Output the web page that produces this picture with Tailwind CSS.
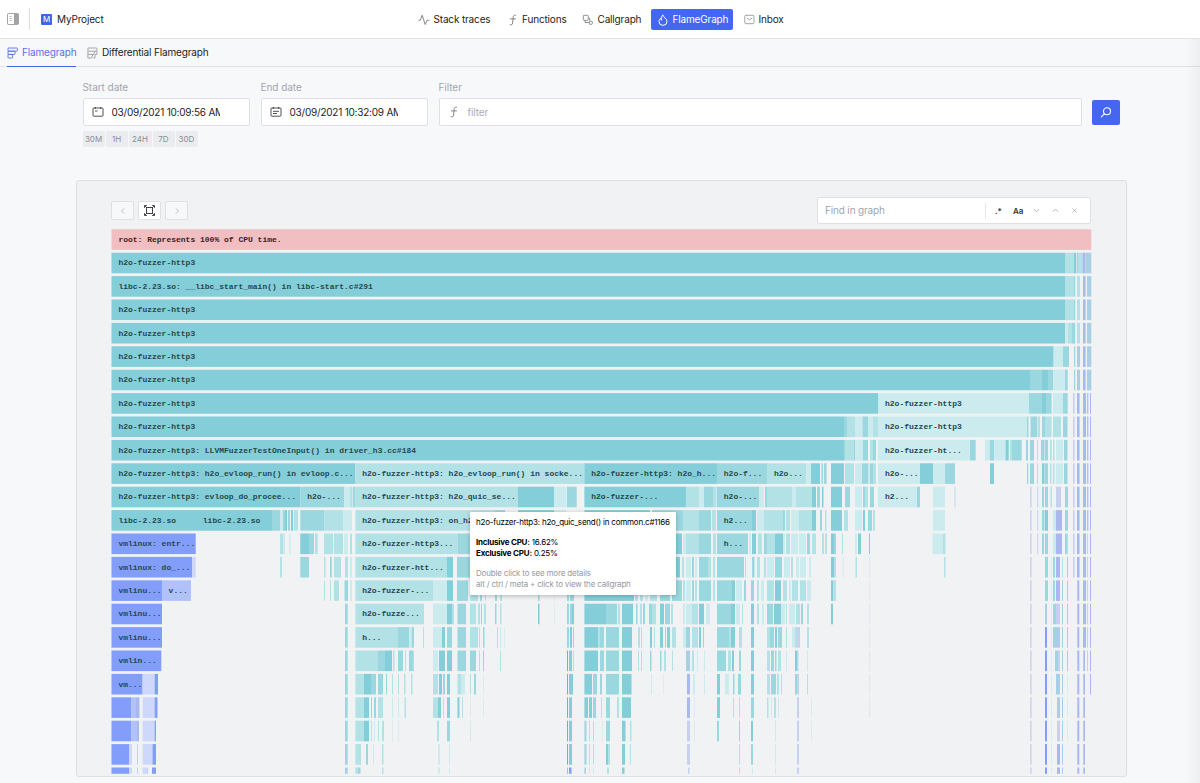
<!DOCTYPE html>
<html lang="en">
<head>
  <meta charset="UTF-8">
  <meta name="viewport" content="width=device-width, initial-scale=1.0">
  <script src="https://cdn.jsdelivr.net/npm/@tailwindcss/browser@4"></script>
  <title>MyProject - FlameGraph</title>
</head>
<body class="relative flex h-[783px] w-[1200px] flex-col overflow-hidden bg-[#f7f8fa] font-['Inter',sans-serif] text-[10px] tracking-[-0.16px] text-[#1c1d21]">

  <!-- Top bar -->
  <header class="relative flex h-[39px] shrink-0 items-center border-b border-[#e3e4e7] bg-white">
    <svg class="ml-[7px] h-3 w-3" viewBox="0 0 12 12" fill="none" stroke="#a3a4a8"><rect x=".5" y=".5" width="11" height="11" rx=".8"/><path d="M7 1h4.5v10H7z" fill="#a3a4a8" stroke="none"/><path d="M2.5 3.5h2M2.5 5.5h2M2.5 7.5h2" stroke-width=".8"/></svg>
    <div class="ml-[10px] h-[22px] w-px bg-[#dcdde0]"></div>
    <div class="ml-[11px] flex h-[11px] w-[11px] items-center justify-center rounded-[1px] bg-[#4263eb] text-[8px] text-white">M</div>
    <span class="ml-[5px] text-[10px]">MyProject</span>
    <nav class="absolute left-[418px] top-[9px] flex h-[21px] items-center">
      <a class="flex w-[89px] items-center gap-[3.5px]">
        <svg class="h-3 w-3" viewBox="0 0 12 12" fill="none" stroke="#85868b" stroke-linecap="round" stroke-linejoin="round"><path d="M.8 6.3h1.5L4.2 1.2l3 9.3 1.9-4.2h2"/></svg>
        <span>Stack traces</span>
      </a>
      <a class="flex w-[75px] items-center gap-[3px]">
        <svg class="h-3 w-3" viewBox="0 0 12 12" fill="none" stroke="#85868b" stroke-linecap="round"><path d="M8.5 1.2C6.5.8 6.3 2 6.1 3.8L5.6 9c-.2 1.6-1 2.2-2.5 1.8M3.4 4.9h5.1"/></svg>
        <span>Functions</span>
      </a>
      <a class="flex w-[69px] items-center gap-[3.5px]">
        <svg class="h-3 w-3" viewBox="0 0 12 12" fill="none" stroke="#85868b" stroke-width=".9"><rect x="1.3" y="1.3" width="5" height="5" rx=".7"/><path d="M3 6.3v2.2h4.2M6.3 4.2h1.4v2.6"/><rect x="7.3" y="7.3" width="3" height="3" rx=".7"/></svg>
        <span>Callgraph</span>
      </a>
      <a class="flex h-[21px] w-[82px] items-center gap-[3.5px] rounded-[2px] bg-[#4566f0] pl-[6px] text-white">
        <svg class="h-3 w-3" viewBox="0 0 12 12" fill="none" stroke="#fff" stroke-linejoin="round"><path d="M5.8.9c.4 2.6 4.2 3.4 4.2 6.5a4 4 0 0 1-8 0c0-1.5.7-2.4 1.5-3.1 0 1 .4 1.5 1.1 1.8C4.4 4.2 4.5 2.2 5.8.9z"/></svg>
        <span>FlameGraph</span>
      </a>
      <a class="ml-[11px] flex items-center gap-[3.5px]">
        <svg class="h-[11px] w-[11px]" viewBox="0 0 11 11" fill="none" stroke="#97989c" stroke-width=".9"><rect x=".8" y="1.3" width="9.2" height="8.4" rx="1"/><path d="M2.7 3.9l2.8 2 2.8-2"/></svg>
        <span>Inbox</span>
      </a>
    </nav>
  </header>

  <!-- Tabs -->
  <div class="flex h-[28px] shrink-0 border-b border-[#e1e3e7] pl-[7px]">
    <div class="flex h-[28px] w-[69px] items-center gap-1 border-b border-[#4566e0] text-[#5a70e6]">
      <svg class="h-3 w-[11px] shrink-0" viewBox="0 0 11 12" fill="none" stroke="currentColor" stroke-width=".9"><rect x="1" y="1" width="9.4" height="3.2" rx=".5"/><rect x="1" y="4.2" width="7" height="3.2" rx=".5"/><rect x="1" y="7.4" width="4.6" height="3.6" rx=".5"/></svg>
      <span>Flamegraph</span>
    </div>
    <div class="ml-[11px] flex h-[27px] items-center gap-1">
      <svg class="h-3 w-[11px] shrink-0" viewBox="0 0 11 12" fill="none" stroke="#909196" stroke-width=".8"><rect x=".9" y="1" width="9" height="3.2" rx=".5"/><path d="M.9 4.200v3.200h5.600l1.500-3.200M.9 7.400v3.600h3.600l1.500-3.600M9.900 4.200v3.200H7.800M8 7.400v3.600H6.200"/></svg>
      <span>Differential Flamegraph</span>
    </div>
  </div>

  <!-- Query form -->
  <div class="flex h-[113px] shrink-0 pl-[82.500px] pt-[13px]">
    <div class="w-[178px]">
      <div class="h-[18px] leading-[14px] tracking-[-0.05px] text-[#a2a5ad]">Start date</div>
      <div class="flex h-7 w-[167px] items-center rounded-[2px] border border-[#dfe0e4] bg-white pl-2">
        <svg class="h-3 w-3" viewBox="0 0 12 12" fill="none" stroke="#3c3d42" stroke-width=".9"><rect x="1" y="2" width="10" height="8.2" rx=".8"/><path d="M3.3 1v2M8.7 1v2M3 5h2.5"/></svg>
        <span class="ml-2 w-[108px] overflow-hidden whitespace-nowrap tracking-[-0.22px]">03/09/2021 10:09:56 AM</span>
      </div>
      <div class="mt-[5px] flex gap-px text-[8px] tracking-normal text-[#8b8d94]">
        <span class="flex h-4 w-[22px] items-center justify-center rounded-[2px] bg-[#ebecef]">30M</span>
        <span class="flex h-4 w-[22px] items-center justify-center rounded-[2px] bg-[#ebecef]">1H</span>
        <span class="flex h-4 w-[23px] items-center justify-center rounded-[2px] bg-[#ebecef]">24H</span>
        <span class="flex h-4 w-[22px] items-center justify-center rounded-[2px] bg-[#ebecef]">7D</span>
        <span class="flex h-4 w-[22px] items-center justify-center rounded-[2px] bg-[#ebecef]">30D</span>
      </div>
    </div>
    <div class="w-[178px]">
      <div class="h-[18px] leading-[14px] tracking-[-0.05px] text-[#a2a5ad]">End date</div>
      <div class="flex h-7 w-[167px] items-center rounded-[2px] border border-[#dfe0e4] bg-white pl-2">
        <svg class="h-3 w-3" viewBox="0 0 12 12" fill="none" stroke="#3c3d42" stroke-width=".9"><rect x="1" y="2" width="10" height="8.2" rx=".8"/><path d="M3.3 1v2M8.7 1v2M3 5.3h6M3 7.5h4"/></svg>
        <span class="ml-2 w-[108px] overflow-hidden whitespace-nowrap tracking-[-0.22px]">03/09/2021 10:32:09 AM</span>
      </div>
    </div>
    <div class="w-[643px]">
      <div class="h-[18px] leading-[14px] tracking-[-0.05px] text-[#a2a5ad]">Filter</div>
      <div class="flex h-7 items-center rounded-[2px] border border-[#dfe0e4] bg-white pl-2">
        <svg class="h-3 w-3" viewBox="0 0 12 12" fill="none" stroke="#85868b" stroke-linecap="round"><path d="M8.5 1.2C6.5.8 6.3 2 6.1 3.8L5.6 9c-.2 1.6-1 2.2-2.5 1.8M3.4 4.9h5.1"/></svg>
        <span class="ml-2 text-[#a9acb4]">filter</span>
      </div>
    </div>
    <div class="ml-[10.5px] mt-[20px] flex h-[25px] w-7 items-center justify-center rounded-[2px] bg-[#4566f0]">
      <svg class="h-3 w-3" viewBox="0 0 12 12" fill="none" stroke="#fff" stroke-width="1.1" stroke-linecap="round"><circle cx="7" cy="4.3" r="3.5"/><path d="M4.4 6.8L1.300 9.800"/></svg>
    </div>
  </div>

  <!-- Graph panel -->
  <main class="ml-[76px] h-[597px] w-[1051px] shrink-0 rounded-[3px] border border-[#dcdfe3] bg-[#f1f2f4] pl-[34px] pt-4">
    <div class="flex h-[27px] w-[980px] items-center gap-1">
      <div class="flex h-[19px] w-[23px] items-center justify-center rounded-[2px] border border-[#dfe0e4] bg-[#f7f8fa]">
        <svg class="h-2 w-2" viewBox="0 0 8 8" fill="none" stroke="#b4b5b9" stroke-width=".9"><path d="M5 1.5L2.5 4 5 6.5"/></svg>
      </div>
      <div class="flex h-[19px] w-[23px] items-center justify-center rounded-[2px] border border-[#dfe0e4] bg-white">
        <svg class="h-[11px] w-[11px]" viewBox="0 0 11 11" fill="none" stroke="#2f3035" stroke-width=".9"><rect x="2.5" y="2.5" width="6" height="6"/><path d="M.5 2.8V.5h2.3M8.2.5h2.3v2.3M10.5 8.2v2.3H8.2M2.8 10.5H.5V8.2M1 1l1.5 1.5M10 1L8.5 2.5M10 10L8.5 8.5M1 10l1.5-1.5"/></svg>
      </div>
      <div class="flex h-[19px] w-[23px] items-center justify-center rounded-[2px] border border-[#dfe0e4] bg-[#f7f8fa]">
        <svg class="h-2 w-2" viewBox="0 0 8 8" fill="none" stroke="#b4b5b9" stroke-width=".9"><path d="M3 1.5L5.5 4 3 6.5"/></svg>
      </div>
      <div class="ml-auto flex h-[27px] w-[274px] items-center rounded-[2px] border border-[#dfe0e4] bg-white">
        <span class="w-[167px] pl-[7px] text-[#a2a5ad]">Find in graph</span>
        <div class="flex h-4 items-center border-l border-[#e6e7ea] text-[8px] font-semibold text-[#333]">
          <span class="ml-[9px] w-[18px]">.*</span>
          <span class="w-[20px]">Aa</span>
          <svg class="mr-[12px] h-[7px] w-[7px]" viewBox="0 0 7 7" fill="none" stroke="#a6a7ab" stroke-width=".8"><path d="M.8 2l2.7 2.7L6.2 2"/></svg>
          <svg class="mr-[12px] h-[7px] w-[7px]" viewBox="0 0 7 7" fill="none" stroke="#a6a7ab" stroke-width=".8"><path d="M.8 4.8l2.7-2.7 2.7 2.7"/></svg>
          <svg class="h-[7px] w-[7px]" viewBox="0 0 7 7" fill="none" stroke="#a6a7ab" stroke-width=".8"><path d="M1.5 1.5l4 4M5.5 1.5l-4 4"/></svg>
        </div>
      </div>
    </div>
    <svg id="graph" class="mt-[5px] h-[545px] w-[981px] tracking-normal" viewBox="111 229 981 545"></svg>
  </main>

  <!-- Edge shadow of the closed side panel -->
  <div class="absolute right-0 top-[39px] h-[744px] w-[15px] bg-linear-to-l from-black/4 to-transparent"></div>

  <!-- Frame tooltip -->
  <div class="absolute left-[470px] top-[512px] h-[83px] w-[206px] whitespace-nowrap rounded-[1px] bg-white pl-[6px] pt-[5px] text-[8px] leading-[10.4px] tracking-[-0.21px] text-black shadow-[0_1px_4px_rgba(0,0,0,0.25)]">
    <p>h2o-fuzzer-http3: h2o_quic_send() in common.c#1166</p>
    <p class="mt-[10px]"><b>Inclusive CPU:</b> 16.62%</p>
    <p><b>Exclusive CPU:</b> 0.25%</p>
    <p class="mt-[10px] tracking-[-0.18px] text-[#96989f]">Double click to see more details</p>
    <p class="tracking-[-0.18px] text-[#96989f]">alt / ctrl / meta + click to view the callgraph</p>
  </div>

  <script>
    const NS = 'http://www.w3.org/2000/svg';
    const graph = document.getElementById('graph');
    const TOP = 229.3, PITCH = 23.4, HEIGHT = 20.6, BOTTOM = 773.8;

    const shades = {
      o: '#f1bec1',
      a: '#84ced9', b: '#9bd7df', c: '#b2e1e6', d: '#cbebef', f: '#dcebee',
      p: '#829efa', q: '#b0c2f9', r: '#cdd8fb',
      e: '#c6d1ef', g: '#a9b9ee', h: '#a9cfe4'
    };

    // one line per depth: shade, start x, end x
    const rows = [
      'o111.5-1091.3',
      'a111.5-1065 c1065-1074 a1074-1076 b1076.6-1078 c1078-1082.6 g1082.6-1085.6 h1086-1091.3',
      'a111.5-1065 c1065-1074',
      'a111.5-1065 c1065-1074',
      'a111.5-1065 d1065-1068 c1068-1072 b1072-1075',
      'a111.5-1053.6 d1053.6-1063 b1063-1069',
      'a111.5-1030.8 b1030.8-1042 a1042-1048 b1048-1053 d1053-1065 b1065-1067.7',
      'a111.5-878 d878-1029 b1029-1042 a1042-1046 b1046-1051.6 d1053-1063 b1063-1067.7',
      'a111.5-844.8 b844.8-847 c847-855 d855-862.5 b862.5-868 d868-873 c873-878 d878-1027 b1027-1028.5 b1030.5-1037 c1037.5-1040 b1042-1045 c1045-1051.5 c1053-1061 b1063-1067.5',
      'a111.5-844.8 c844.8-854 b854-855 d855-863 b863-868 c870-873 b873-876 d878-970 b970-975.7 d985-990 b990-994 d994-1005 c1005-1006 a1006-1008.7 c1010-1012 b1012-1021.7 b1026-1028 b1030-1034 c1037-1038 b1041-1044.5 b1045-1048 c1050-1051.7 c1053-1054.5 d1056-1063 b1064-1067.5',
      'a111.5-355.4 c355.4-584.4 a584.4-717 b717-767 c767-806.5 d806.5-811 a811-820 b821.5-823 b824-826.6 a831-844 c845-854 d855-862 b862-868 d868-870 b870-873 c873-876 d878-920 a920-933 d933-945 b945-955 a990-994 b1027-1028.3 b1030-1034 c1037-1038 a1042-1044.5 b1045-1048 c1050-1051.5 c1053-1054.5 d1056-1063 b1064-1067.5',
      'a111.5-300.3 b300.3-344 d344-350 c350-352.5 b353-355.4 c355.4-518 a518-554 d554-566.5 b567-576.7 a584.4-686 c686-699 d699-704 b704-713 c713-716.5 b717-759 d759-764 b765-767 c767-792 d792-796 c796-812 a812-816 b817-820 a822-823.5 a831-842 b845-850 d855-862 b863-865 c865-868 b870-874 d878-917 b917-920 d933-945 e954.5-955.5 b1042-1044 b1045-1048 c1050.5-1052 e1056-1061 b1065-1068',
      'a111.5-272 b272-280 d280-283 b283-285 a285-287 b288-290 a291-293 c294-298 b300.3-324.5 c324.5-343 d343-352 c355.4-495 b495-505 a518-554 d554-566 a584.4-650 b652-683 c683-699 b699-711 c712-716 b717-752 a752-756 d757-764 c764-767 c767-783 b783-785 c786-790 d791-799 c799-812 a812-816 b820-822 c825-826.5 a831-842 c844-848 d855-862 a863-865 b868-872 c873-875 d933-945 b1042-1044.5 a1045-1048 d1053-1056 g1056-1062 b1065-1068',
      'p111.5-195.7 c280-283 d283-285 d289-290.5 a300.3-309 b309-314 c315-317.7 c324-333 c334-343 d344-348 c350-352 c355.4-457.5 b457.5-478 a670-682 d683-686 c686-699 b699-711 c713-716 b717-748 d749-751 a752-756 c758-762 b764-767 c767-775 a775-783 d783-785 c786-790 d791-798 d799-806 b807-810 c812-816 c822-824 c825-827 a831-834 b834-836 c842-843 d855-857 a858-861 a869-870 d932.5-943 c943-945.5 b1042-1044 b1045-1048 d1053-1056 g1056-1062 b1065-1067.7',
      'p111.5-192 r192-195.7 c280-282 b300.3-309 c324-325.5 b330-331.8 c334-341 c345-348 d350-352 c355.4-447 a447-453 b457-476 a670-680 c682-684 d686-691 b692-694 d695-697 b699-708 c708-711 c713-715 b717-744 c745-746 b752-754.5 c757-760 c764-766 d767-774 b775-782 d784-790 c791-793 d796-799 d800-806 d809-811 a831-834 c834-836 f842.5-844 c855.5-857 c944-945.5 b1045-1048 b1053-1055 g1056-1060 c1062-1063',
      'p111.5-162 q162-191 c324-325 c330-331 c334-339 b344.500-348 d350-352 c355.4-433 d433-447 a447-453 b457-468 c470-478 b480-482 c485-486 b495-497 c500-502 b538-539.5 f554-555 b567-569 b570-574 a584.4-634 c635-638 c640-643 d645-648 c650-657 b660-670 b672-682 c683-685 d686-691 b692-694 c695-697 b699-711 c713-715 b717-732 a732-735 d736-742 b744-746 b751-754 c757-759 d761-764 c767-774 a775-781 c783-787 d789-791 c792-798 c800-806 d807-811 a831-833.500 c834-836 b1045-1048 b1053-1055 g1056-1060',
      'p111.5-162 b345-347.7 c355.4-424 d433-447 a447-452 c452-454 b457.5-466 c470-476 c478-480 b481-482 c484-486 b495-496.5 c500-501.5 a538-539.5 f554-555 b567-569 b570-572 a572-574 a584.4-606 b606-617 c618-620 a622-633 b636-637.5 c640-642 b643-645 b649-652 c652-656 a660-664 b665-670 c671-673 d683-685 d686-692 c692-698 a699-704 d706-710 b717-731 a731-735 d736-740 c742-743 a751-754 c757-759 d762-764 b767-773 a774-781 d781-785 c786-787 d789-795 c796-800 b801-803 c807-809 a831-833 h1045-1047 b1053-1056 e1056-1060',
      'p111.5-162 b345-347.7 c355.4-398 b398-409 d409-411 b411.5-414 c423-424 d433-442 a442-445 b447-452 b457.5-466 c470-478 c479-480 b483-484.5 c497-498 d500-501 f504-505 b567-569 a570-572 b573-574 a584.4-598 c598-600 b600-604 b606-619 a622-632 c638-640 c641-642 a650-652 c654-655 a660-663 b665-666 a667-670 c672-676 d683-686 b686-690 c692-698 a699-701 b703-704 b717-729 c729-731 a731-735 c739-742 a751-754 c767-770 b770-774 a775-777 b778-782 c786-787 d792-795 c795-797 e797-800 c807-809 p1045-1047 b1053-1056 h1056-1060',
      'p111.5-161.3 b345-347.7 c355.4-378 b378-385 a385-392 c393-394.5 b398-403 c405-406 b409-413.7 d433-438 a439-445 a447-452 b457.5-466 b470-476 c479-480 b483-484 c500-501 p567-568 a569-572 c573-574 a584.4-598 b600-604 b606-619 a622-632 c638-639 c641-642 b650-651.5 b660-661.5 c664-666 c672-673 h686-690 c692-694 d697-698 d704-705 b717-726 c728-731 a732-734 b739-741 a751-754 c767-770 b771-774 b775-776.5 c778-781 d786-787 a795-797 e797-798.5 d807-808 p1045-1047 b1055-1058 e1058-1060',
      'p111.5-142.6 r142.6-154 p154.5-158 b345-347.7 c355.4-364 a364-371 b371-376 b378-383 b386-387 c392-393 c398-399 c404-405.5 c411-412.5 c433-438 a439-442 b443-445 a447-450 c457.5-461 d461-465 c470-471 b474-476 f483-484 p567-568 a569-573 a584.4-592 b593-597 b600-602 b606-619 a622-631 c631-632 d651-652 f663-664 g687-690 d693-695 d704-705 a717-720 d725-729 b733-734.5 b738-741 a751-754 c767-770 b771-776 c777-779 c781-782 b795-797 e797-799 c807-808 p1045-1047 h1056-1060',
      'p111.5-131.5 q131.5-136 g136-139.5 r142.6-154 p154.5-157.5 b345-347.7 c355.4-364 a364-369 b371-372 b374-376 c378-383 d392-393 d398-399 c404.5-406 c433-438 a438-441 c443-444 a447-450 a457.5-459.5 c462-463 f470-471 f483-484 p567-568 a569-572 a584.4-588 a589-592 b593-596 c601-602 b606-610 c617-619 a622-631 g687-690 f694-695 a717-720 c733-734 c739-740 b751-754 c767-768.5 d771-772 c774-776 d778-779 e797-799 f811-812 p1045-1047 h1057-1060',
      'p111.5-131.5 q131.5-137 g137-139 r142.6-154 p154.5-156 b345-347.7 c355.4-364 a364-369 c371-372 d374-375 c378-379 c382-384 f392-393 f398-399 c437-439 b447-450 d470-471 p567-568 a569-572 b584.4-586.5 c589-590 c593-594 f602-603 b606-610 a622-625.5 c630-631.5 e687-690 f694-695 b717-719 b739-740 a751-753 d775-776 e797-799 f811-812 p1045-1047 e1057-1060',
      'p111.5-129 r129-132 e137-138 r142.6-152 q152-153 p153-156 h345-347.7 c355.4-361 b366-368 d373-374 c382-383.5 d438-440 d449-450 p567-568 a569-572 b584.4-586.5 c589-590 c593-594 a606-608 c608-610 a622-625 c630-631 e687-690 c739-740 b751-753 d775-776 e797-799 p1045-1047 g1057-1060',
      'p111.5-129 r129-132 e137-138 r142.6-147 e147-148 p152-156 h345-347.7 c355.4-358 b358-360.5 c382-383.5 d438-440 d449-450 g567-568 p569-571.5 b584.4-586 d589-590 d593-594 c607-609 a622-624.5 e688-689.5 c739-740 d752-753 d775-776 e797-799 p1045-1047 g1057-1060'
    ];

    // narrow stacks that repeat over many depths: first row, last row, shade, start x, end x
    const stacks = [
      [2, 6, 'b', 1074, 1075.2], [2, 4, 'c', 1077, 1080], [5, 6, 'h', 1077, 1080],
      [2, 4, 'g', 1083, 1085.6], [5, 6, 'g', 1083, 1085.6], [2, 6, 'h', 1087, 1091.3],
      [7, 14, 'e', 1073, 1074.6], [7, 14, 'g', 1077, 1079.6], [15, 23, 'g', 1077.3, 1079.3],
      [7, 17, 'g', 1083, 1086], [18, 23, 'g', 1083.3, 1085],
      [7, 12, 'q', 1087, 1088.4], [13, 18, 'e', 1087, 1088], [7, 19, 'g', 1090, 1091],
      [11, 23, 'e', 1030.2, 1031.6], [11, 13, 'e', 1037.2, 1038.2], [14, 23, 'f', 1051, 1052],
      [15, 23, 'h', 1062, 1063], [14, 18, 'b', 1067, 1068], [19, 21, 'f', 1067, 1068],
      [14, 20, 'f', 869, 870.2]
    ];

    // row, x, label
    const labels = [
      [0, 118.4, 'root: Represents 100% of CPU time.'],
      [1, 118.4, 'h2o-fuzzer-http3'],
      [2, 118.4, 'libc-2.23.so: __libc_start_main() in libc-start.c#291'],
      [3, 118.4, 'h2o-fuzzer-http3'],
      [4, 118.4, 'h2o-fuzzer-http3'],
      [5, 118.4, 'h2o-fuzzer-http3'],
      [6, 118.4, 'h2o-fuzzer-http3'],
      [7, 118.4, 'h2o-fuzzer-http3'],
      [7, 885, 'h2o-fuzzer-http3'],
      [8, 118.4, 'h2o-fuzzer-http3'],
      [8, 885, 'h2o-fuzzer-http3'],
      [9, 118.4, 'h2o-fuzzer-http3: LLVMFuzzerTestOneInput() in driver_h3.cc#184'],
      [9, 885, 'h2o-fuzzer-ht...'],
      [10, 118.4, 'h2o-fuzzer-http3: h2o_evloop_run() in evloop.c...'],
      [10, 362.2, 'h2o-fuzzer-http3: h2o_evloop_run() in socke...'],
      [10, 591.2, 'h2o-fuzzer-http3: h2o_h...'],
      [10, 723.8, 'h2o-f...'],
      [10, 774, 'h2o...'],
      [10, 885, 'h2o-...'],
      [11, 118.4, 'h2o-fuzzer-http3: evloop_do_procee...'],
      [11, 307.2, 'h2o-...'],
      [11, 362.2, 'h2o-fuzzer-http3: h2o_quic_se...'],
      [11, 591.2, 'h2o-fuzzer-...'],
      [11, 723.8, 'h2o-...'],
      [11, 885, 'h2...'],
      [12, 118.4, 'libc-2.23.so'],
      [12, 202.8, 'libc-2.23.so'],
      [12, 362.2, 'h2o-fuzzer-http3: on_h2'],
      [12, 723.8, 'h2...'],
      [13, 118.4, 'vmlinux: entr...'],
      [13, 362.2, 'h2o-fuzzer-http3...'],
      [13, 723.8, 'h...'],
      [14, 118.4, 'vmlinux: do_...'],
      [14, 362.2, 'h2o-fuzzer-htt...'],
      [15, 118.4, 'vmlinu...'],
      [15, 168.6, 'v...'],
      [15, 362.2, 'h2o-fuzzer-...'],
      [16, 118.4, 'vmlinu...'],
      [16, 362.2, 'h2o-fuzze...'],
      [17, 118.4, 'vmlinu...'],
      [17, 362.2, 'h...'],
      [18, 118.4, 'vmlin...'],
      [19, 118.4, 'vm...']
    ];

    function addFrame(row, shade, x0, x1) {
      const y = TOP + row * PITCH;
      const rect = document.createElementNS(NS, 'rect');
      rect.setAttribute('x', x0);
      rect.setAttribute('y', y);
      rect.setAttribute('width', x1 - x0);
      rect.setAttribute('height', Math.min(HEIGHT, BOTTOM - y));
      rect.setAttribute('fill', shades[shade]);
      graph.appendChild(rect);
    }

    rows.forEach((line, row) => {
      line.split(' ').forEach(item => {
        const [x0, x1] = item.slice(1).split('-').map(Number);
        addFrame(row, item[0], x0, x1);
      });
    });

    stacks.forEach(([first, last, shade, x0, x1]) => {
      for (let row = first; row <= last; row++) addFrame(row, shade, x0, x1);
    });

    labels.forEach(([row, x, label]) => {
      const text = document.createElementNS(NS, 'text');
      text.setAttribute('x', x);
      text.setAttribute('y', TOP + row * PITCH + 12.7);
      text.setAttribute('class', row === 0
        ? "fill-[#3a2326] font-['Liberation_Mono',monospace] text-[8px] font-bold"
        : "fill-[#27474f] font-['Liberation_Mono',monospace] text-[8px] font-bold");
      text.textContent = label;
      graph.appendChild(text);
    });
  </script>
</body>
</html>
